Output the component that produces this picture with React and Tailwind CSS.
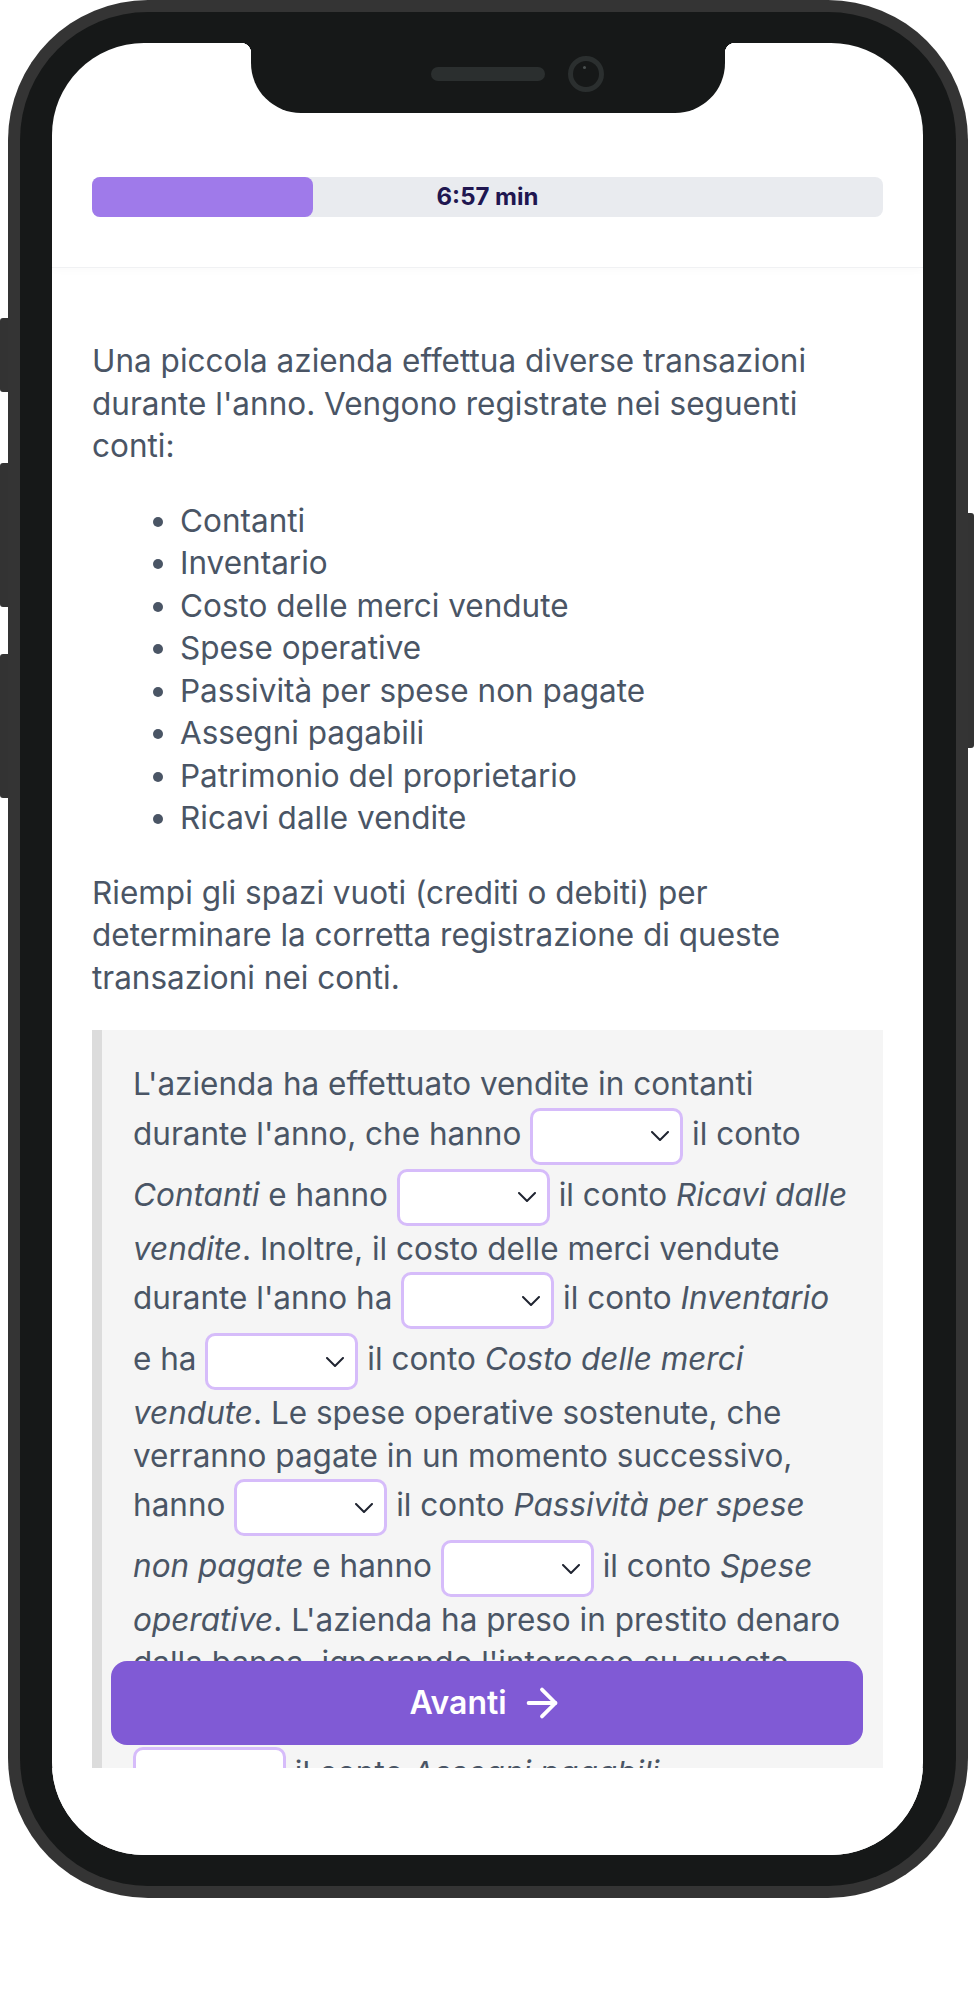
import React from "react";
import { ArrowRight } from "lucide-react";

const Blank = () => (
  <span className="inline-flex items-center justify-end align-middle w-[153px] h-[57px] my-[2px] bg-white border-[3px] border-[#d6bcfa] rounded-[10px] pr-[11px]">
    <svg width="18" height="10" viewBox="0 0 18 10" fill="none">
      <polyline points="1,1 9,9 17,1" stroke="#1f2430" strokeWidth="2" strokeLinecap="round" strokeLinejoin="round" />
    </svg>
  </span>
);

const accounts = [
  "Contanti",
  "Inventario",
  "Costo delle merci vendute",
  "Spese operative",
  "Passività per spese non pagate",
  "Assegni pagabili",
  "Patrimonio del proprietario",
  "Ricavi dalle vendite",
];

const App = () => {
  return (
    <div className="w-[976px] h-[2004px] bg-white pl-[8px] font-['Inter','Noto_Sans',sans-serif]">
      <div className="relative w-[960px] h-[1898px] rounded-[140px] bg-[#343434] p-[12px]">
        {/* side buttons */}
        <div className="absolute -left-[8px] top-[318px] w-[8px] h-[74px] rounded-l-[3px] bg-[#333333]" />
        <div className="absolute -left-[8px] top-[463px] w-[8px] h-[144px] rounded-l-[3px] bg-[#333333]" />
        <div className="absolute -left-[8px] top-[654px] w-[8px] h-[144px] rounded-l-[3px] bg-[#333333]" />
        <div className="absolute -right-[6px] top-[513px] w-[6px] h-[235px] rounded-r-[3px] bg-[#333333]" />

        <div className="h-full rounded-[128px] bg-[#161818] pt-[31px] pb-[31px] pl-[32px] pr-[33px]">
          <div className="relative h-full bg-white rounded-[92px] overflow-hidden flex flex-col">
            {/* notch */}
            <div className="absolute top-0 left-1/2 -translate-x-1/2 w-[474px] h-[70px] bg-[#161818] rounded-b-[50px] z-20 flex items-center justify-center gap-[23px] pl-[60px] pb-[8px]">
              <div className="w-[114px] h-[14px] rounded-full bg-[#2b2f2f]" />
              <div className="w-[36px] h-[36px] rounded-full border-[5px] border-[#2b2f2f] bg-[#161818] flex items-start justify-center pt-[5px] pr-[3px]">
                <div className="w-[3px] h-[3px] rounded-full bg-[#4a5050]" />
              </div>
            </div>
            <div className="absolute top-0 left-[189px] w-[10px] h-[10px] z-20 bg-[radial-gradient(circle_at_0_100%,transparent_10px,#161818_10.5px)]" />
            <div className="absolute top-0 left-[673px] w-[10px] h-[10px] z-20 bg-[radial-gradient(circle_at_100%_100%,transparent_10px,#161818_10.5px)]" />

            {/* header */}
            <div className="shrink-0 px-[40px] pt-[134px] pb-[50px] border-b border-[#f0f1f3] shadow-[0_3px_8px_rgba(0,0,0,0.02)]">
              <div className="relative h-[40px] rounded-[8px] bg-[#e9ebef]">
                <div className="h-full w-[28%] rounded-[8px] bg-[#9f7aea]" />
                <div className="absolute inset-0 flex items-center justify-center text-[24px] font-bold text-[#201650]">
                  6:57 min
                </div>
              </div>
            </div>

            {/* content */}
            <div className="flex-1 overflow-hidden px-[40px] pt-[72px] text-[31.5px] leading-[42.5px] text-[#4a5565]">
              <p className="pr-[12px]">
                Una piccola azienda effettua diverse transazioni durante l'anno. Vengono registrate nei seguenti conti:
              </p>
              <ul className="mt-[32px] pl-[88px] list-disc">
                {accounts.map((a) => (
                  <li key={a}>{a}</li>
                ))}
              </ul>
              <p className="mt-[32px] pr-[12px]">
                Riempi gli spazi vuoti (crediti o debiti) per determinare la corretta registrazione di queste transazioni nei conti.
              </p>
              <div className="mt-[31px] border-l-[10px] border-[#dcdcdc] bg-[#f5f5f5] pl-[31px] pr-[26px] pt-[33px] pb-[40px]">
                <p>
                  L'azienda ha effettuato vendite in contanti durante l'anno, che hanno <Blank /> il conto{" "}
                  <em>Contanti</em> e hanno <Blank /> il conto <em>Ricavi dalle vendite</em>. Inoltre, il costo delle
                  merci vendute durante l'anno ha <Blank /> il conto <em>Inventario</em> e{"\u00a0"}ha <Blank /> il
                  conto <em>Costo delle merci vendute</em>. Le spese operative sostenute, che verranno pagate in un
                  momento successivo, hanno <Blank /> il conto <em>Passività per spese non pagate</em> e hanno{" "}
                  <Blank /> il conto <em>Spese operative</em>. L'azienda ha preso in prestito denaro dalla banca,
                  ignorando l'interesse su questo prestito. Ciò ha <Blank /> il conto <em>Contanti</em> e ha{" "}
                  <Blank /> il conto <em>Assegni pagabili</em>.
                </p>
              </div>
            </div>
            <div className="shrink-0 h-[87px] bg-white" />

            {/* next button */}
            <button className="absolute left-[59px] right-[60px] bottom-[110px] h-[84px] rounded-[16px] bg-[#805ad5] text-white flex items-center justify-center gap-[12px] text-[32px] font-semibold z-10">
              Avanti
              <ArrowRight size={46} strokeWidth={2} />
            </button>
          </div>
        </div>
      </div>
    </div>
  );
};

export default App;
